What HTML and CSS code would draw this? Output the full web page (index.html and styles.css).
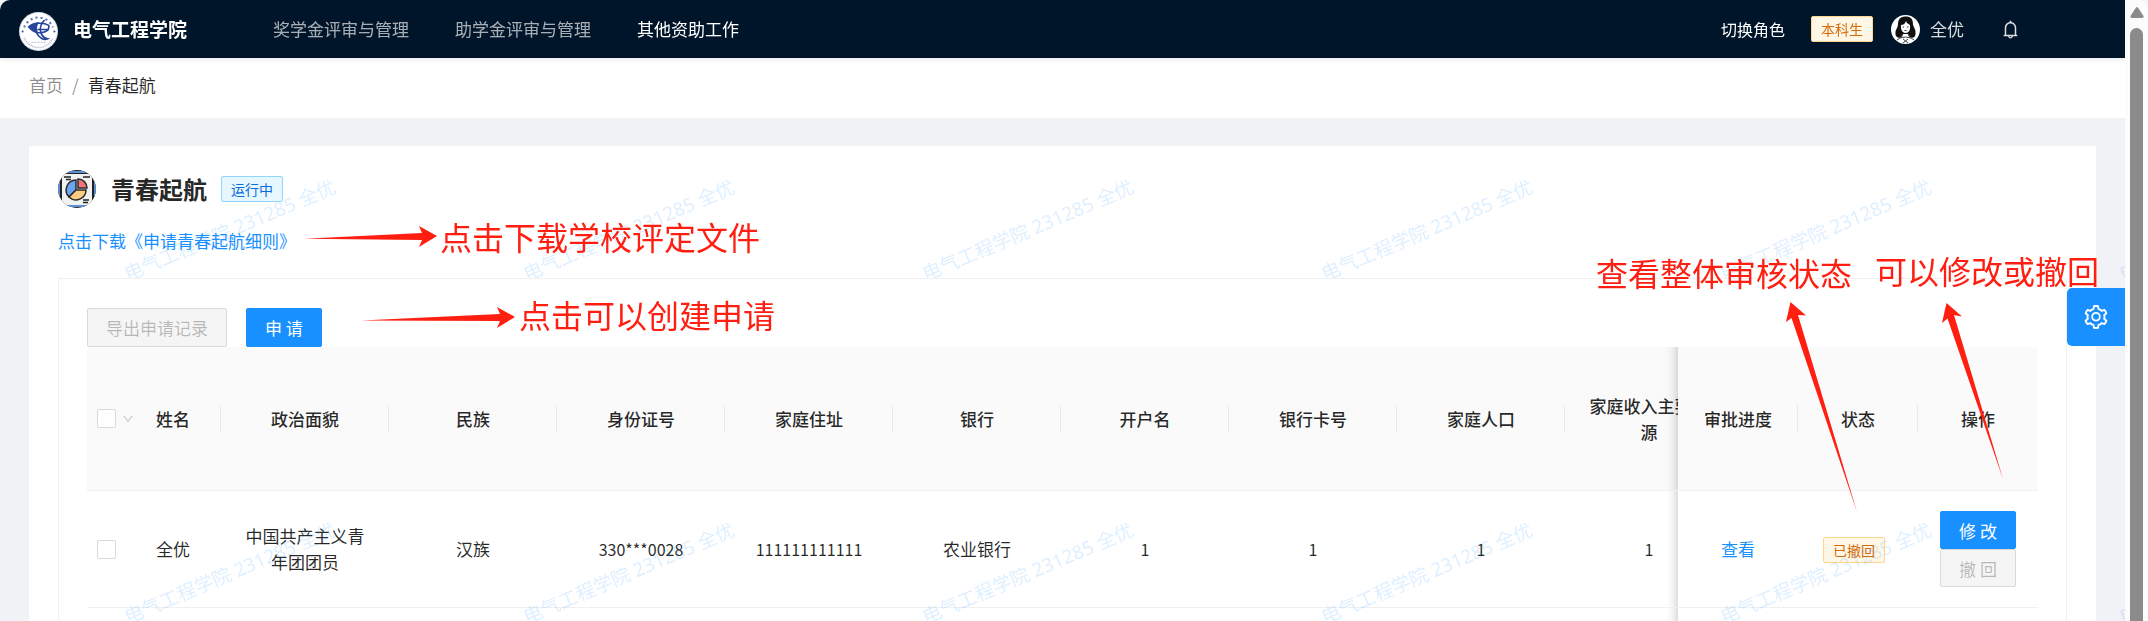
FILE: index.html
```html
<!DOCTYPE html>
<html lang="zh-CN">
<head>
<meta charset="utf-8">
<title>青春起航</title>
<link rel="stylesheet" href="styles.css">
</head>
<body>
<div class="page">
  <header class="topbar">
    <svg class="logo" viewBox="0 0 38 38" aria-hidden="true">
      <circle cx="19" cy="19" r="19" fill="#d9dde8"/>
      <circle cx="19" cy="19" r="18" fill="#fff"/>
      <g fill="none" stroke="#5b74b4" stroke-width="2" stroke-dasharray="2 3">
        <path d="M5 15A15 15 0 0 1 33 15"/>
      </g>
      <path d="M5 25A15 15 0 0 0 33 25" fill="none" stroke="#a9b3cf" stroke-width="1.5" stroke-dasharray="1 1"/>
      <path d="M12 29.500H26" stroke="#b5bdd4" stroke-dasharray="2 1"/>
      <circle cx="3.500" cy="19" r="1" fill="#31509f"/><circle cx="34.500" cy="19" r="1" fill="#31509f"/>
      <path d="M9 15C12 11 16 10 20 10C17 13 17 17 19 21C14 20 11 18 9 15Z" fill="#27459a"/>
      <g fill="none" stroke="#27459a" stroke-width="1.600">
        <path d="M9 15C14 10 24 10 29 13C30 18 25 21 17 20"/>
        <path d="M25 8C19 13 19 24 28 26C24 28 19 25 17 20"/>
        <path d="M18 17H29"/>
      </g>
    </svg>
    <span class="school">电气工程学院</span>
    <nav class="menu">
      <a href="#">奖学金评审与管理</a>
      <a href="#">助学金评审与管理</a>
      <a href="#" class="current">其他资助工作</a>
    </nav>
    <div class="account">
      <a href="#" class="switch">切换角色</a>
      <span class="tag tag-orange">本科生</span>
      <span class="user">
        <svg class="avatar" viewBox="0 0 29 29" aria-hidden="true">
          <circle cx="14.500" cy="14.500" r="14.500" fill="#fff"/>
          <path d="M7 9C7 4 10 1 15 1.500C20 1 22 5 22 9C22 12 25 14 24.500 18C25 22 22 24 18 22L17 19H12L11 22C8 24 4 22 4.500 18C4 15 7 13 7 9Z" fill="#111"/>
          <path d="M10 10C12 10 14 9 15 6C16 9 18 9 19 10C19.500 15 18 18 14.500 18C11 18 9.500 14 10 10Z" fill="#fff"/>
          <path d="M11.500 12H13M16 12H17.500M13.500 15.500H15.500M12 19L9 23L14.500 22L20 23L17 19M9 23L6 25M20 23L23 25M12 24L17 28M17 24L12 28" fill="none" stroke="#444"/>
        </svg>
        全优
      </span>
      <button class="bell" aria-label="通知">
        <svg viewBox="0 0 1024 1024"><path d="M816 768h-24V428c0-141.1-104.3-257.7-240-277.1V112c0-22.1-17.9-40-40-40s-40 17.9-40 40v38.9c-135.7 19.4-240 136-240 277.1v340h-24c-17.7 0-32 14.3-32 32v32c0 4.4 3.6 8 8 8h216c0 61.8 50.2 112 112 112s112-50.2 112-112h216c4.400 0 8-3.600 8-8v-32c0-17.700-14.300-32-32-32zM512 888c-26.500 0-48-21.500-48-48h96c0 26.500-21.500 48-48 48zM304 768V428c0-55.600 21.600-107.800 60.900-147.100S456.400 220 512 220c55.600 0 107.800 21.600 147.100 60.900S720 372.400 720 428v340H304z"/></svg>
      </button>
    </div>
  </header>

  <nav class="crumbs" aria-label="面包屑">
    <a href="#">首页</a><span class="slash">/</span><span class="here">青春起航</span>
  </nav>

  <main class="content">
    <section class="card">
      <div class="heading">
        <svg class="badge" viewBox="0 0 38 38" aria-hidden="true">
          <clipPath id="round"><circle cx="19" cy="19" r="19"/></clipPath>
          <g clip-path="url(#round)">
            <rect width="38" height="38" fill="#222"/>
            <path d="M0 2H38M0 36H38M1 0V38M37 0V38" stroke="#5f8fd6" stroke-width="2"/>
            <rect x="4" y="4" width="30" height="31" fill="#f1f1f1"/>
            <path d="M6 7H13M8 9.500H13M25 7H32M25 30H31M25 32.500H30" stroke="#222" stroke-width="1.300"/>
            <g stroke="#2b2b2b" stroke-width="1.500">
              <path d="M18 20V10A10 10 0 0 0 11 27Z" fill="#6ba5ee"/>
              <path d="M18 20L11 27A10 10 0 0 0 28 20Z" fill="#fdcb82"/>
              <path d="M20 18V9A9 9 0 0 1 29 18Z" fill="#f3747c"/>
            </g>
          </g>
        </svg>
        <h1>青春起航</h1>
        <span class="tag tag-blue">运行中</span>
      </div>
      <a href="#" class="download">点击下载《申请青春起航细则》</a>

      <div class="panel">
        <div class="actions">
          <button class="btn" disabled>导出申请记录</button>
          <button class="btn primary">申 请</button>
        </div>
        <div class="scroller">
          <table class="records">
            <colgroup>
              <col class="c-check"><col class="c-name">
              <col><col><col><col><col><col><col><col><col>
              <col class="c-fixed"><col class="c-fixed"><col class="c-fixed">
            </colgroup>
            <thead>
              <tr>
                <th class="check"><span class="pick"><input type="checkbox" aria-label="全选"><button class="more" aria-label="选择菜单"><svg viewBox="0 0 1024 1024"><path d="M884 256h-75c-5.100 0-9.900 2.500-12.900 6.600L512 654.200 227.900 262.600c-3-4.100-7.800-6.600-12.900-6.600h-75c-6.500 0-10.300 7.400-6.500 12.700l352.600 486.100c12.800 17.600 39 17.600 51.700 0l352.600-486.100c3.900-5.300.1-12.700-6.400-12.700z"/></svg></button></span></th>
                <th class="rule">姓名</th>
                <th class="rule">政治面貌</th>
                <th class="rule">民族</th>
                <th class="rule">身份证号</th>
                <th class="rule">家庭住址</th>
                <th class="rule">银行</th>
                <th class="rule">开户名</th>
                <th class="rule">银行卡号</th>
                <th class="rule">家庭人口</th>
                <th>家庭收入主要来源</th>
                <th class="rule pin pin-3">审批进度</th>
                <th class="rule pin pin-2">状态</th>
                <th class="pin pin-1">操作</th>
              </tr>
            </thead>
            <tbody>
              <tr>
                <td class="check"><span class="pick"><input type="checkbox" aria-label="选择全优"></span></td>
                <td>全优</td>
                <td>中国共产主义青年团团员</td>
                <td>汉族</td>
                <td class="num">330***0028</td>
                <td class="num">111111111111</td>
                <td>农业银行</td>
                <td class="num">1</td>
                <td class="num">1</td>
                <td class="num">1</td>
                <td class="num">1</td>
                <td class="pin pin-3"><a href="#">查看</a></td>
                <td class="pin pin-2 state"><span class="tag tag-orange">已撤回</span></td>
                <td class="pin pin-1"><span class="ops"><button class="btn primary small">修 改</button><button class="btn small" disabled>撤 回</button></span></td>
              </tr>
              <tr>
                <td colspan="11"></td>
                <td class="pin pin-3"></td>
                <td class="pin pin-2"></td>
                <td class="pin pin-1"></td>
              </tr>
            </tbody>
          </table>
        </div>
      </div>
    </section>
  </main>

  <svg class="watermark" aria-hidden="true">
    <pattern id="mark" width="399" height="343" patternUnits="userSpaceOnUse">
      <text transform="translate(128 281) rotate(-23)">电气工程学院 231285 全优</text>
    </pattern>
    <rect width="100%" height="100%" fill="url(#mark)"/>
  </svg>

  <button class="settings" aria-label="设置">
    <svg viewBox="64 64 896 896"><path d="M924.800 625.700l-65.500-56c3.100-19 4.700-38.400 4.700-57.800s-1.600-38.800-4.700-57.800l65.500-56a32.030 32.030 0 009.300-35.200l-.9-2.600a443.740 443.740 0 00-79.700-137.900l-1.800-2.100a32.120 32.120 0 00-35.100-9.500l-81.300 28.900c-30-24.600-63.500-44-99.700-57.600l-15.700-85a32.050 32.050 0 00-25.800-25.700l-2.700-.5c-52.100-9.400-106.900-9.400-159 0l-2.700.5a32.050 32.050 0 00-25.800 25.700l-15.800 85.400a351.860 351.860 0 00-99 57.400l-81.900-29.100a32 32 0 00-35.100 9.500l-1.800 2.100a446.020 446.020 0 00-79.700 137.900l-.9 2.600c-4.500 12.500-.8 26.500 9.300 35.200l66.300 56.600c-3.100 18.800-4.600 38-4.600 57.100 0 19.200 1.500 38.400 4.600 57.100L99 625.500a32.030 32.030 0 00-9.300 35.200l.9 2.600c18.100 50.400 44.900 96.900 79.700 137.900l1.800 2.100a32.120 32.120 0 0035.100 9.500l81.900-29.100c29.800 24.500 63.100 43.900 99 57.400l15.800 85.400a32.050 32.050 0 0025.800 25.700l2.700.5a449.400 449.400 0 00159 0l2.700-.5a32.050 32.050 0 0025.800-25.700l15.700-85a350 350 0 0099.700-57.600l81.300 28.900a32 32 0 0035.100-9.500l1.800-2.100c34.800-41.100 61.600-87.500 79.700-137.900l.9-2.600c4.500-12.300.8-26.300-9.300-35zM788.300 465.900c2.500 15.100 3.800 30.600 3.800 46.100s-1.300 31-3.800 46.100l-6.600 40.100 74.700 63.900a370.030 370.030 0 01-42.600 73.600L721 702.800l-31.400 25.800c-23.900 19.600-50.500 35-79.300 45.800l-38.100 14.300-17.900 97a377.500 377.500 0 01-85 0l-17.900-97.200-37.800-14.500c-28.500-10.800-55-26.200-78.700-45.700l-31.400-25.900-93.400 33.200c-17-22.900-31.200-47.600-42.600-73.600l75.500-64.500-6.500-40c-2.400-14.900-3.700-30.300-3.700-45.500 0-15.300 1.200-30.600 3.700-45.500l6.500-40-75.500-64.500c11.300-26.100 25.600-50.700 42.600-73.600l93.400 33.200 31.400-25.900c23.700-19.500 50.200-34.900 78.700-45.700l37.900-14.300 17.900-97.200c28.100-3.200 56.800-3.200 85 0l17.900 97 38.100 14.300c28.700 10.800 55.400 26.200 79.300 45.800l31.400 25.800 92.800-32.900c17 22.900 31.200 47.600 42.600 73.600L781.800 426l6.500 39.900zM512 326c-97.200 0-176 78.800-176 176s78.800 176 176 176 176-78.800 176-176-78.800-176-176-176zm79.200 255.200A111.600 111.600 0 01512 614c-29.900 0-58-11.700-79.200-32.800A111.600 111.600 0 01400 502c0-29.900 11.700-58 32.800-79.200C454 401.600 482.100 390 512 390c29.900 0 58 11.600 79.200 32.800A111.600 111.600 0 01624 502c0 29.900-11.700 58-32.800 79.200z"/></svg>
  </button>
</div>

<div class="scrollbar" aria-hidden="true">
  <svg viewBox="0 0 14 11"><path d="M7 0C8 0 8 1 9 2L13.500 9C14 10 13 11 12 11H2C1 11 0 10 .5 9L5 2C6 1 6 0 7 0Z"/></svg>
  <div class="thumb"></div>
</div>

<svg class="arrow arrow-download" viewBox="0 0 133 21" aria-hidden="true"><path d="M0 12.700L118 7L115 0L133 10L115 21L118 14Z"/></svg>
<span class="note note-download">点击下载学校评定文件</span>
<svg class="arrow arrow-apply" viewBox="0 0 154 21" aria-hidden="true"><path d="M0 13.500L139 7L136 0L154 10L136 21L139 14Z"/></svg>
<span class="note note-apply">点击可以创建申请</span>
<svg class="arrow arrow-status" viewBox="0 0 71 210" aria-hidden="true"><path d="M4.500 0L0 20L5.500 16L71 210L12 13L20 13.500Z"/></svg>
<span class="note note-status">查看整体审核状态</span>
<svg class="arrow arrow-ops" viewBox="0 0 61 176" aria-hidden="true"><path d="M4.500 0L0 20L5.500 15.500L61 176L12 12L20 13.500Z"/></svg>
<span class="note note-ops">可以修改或撤回</span>
</body>
</html>
```

FILE: styles.css
```css
* { box-sizing: border-box; }

body {
  position: relative;
  display: flex;
  height: 100vh;
  margin: 0;
  overflow: hidden;
  background: #f4f5f5;
  color: rgba(0, 0, 0, .85);
  font: 17px/26px "Noto Sans CJK SC", "Noto Sans", sans-serif;
}

a { color: #1890ff; text-decoration: none; }
button { font: inherit; }

.page {
  position: relative;
  display: flex;
  flex: 1;
  flex-direction: column;
  min-width: 0;
  overflow: hidden;
  border-top-left-radius: 10px;
  background: #f0f2f5;
}

/* Top bar */
.topbar {
  position: relative;
  z-index: 3;
  display: flex;
  flex: none;
  align-items: center;
  height: 58px;
  padding: 0 104px 0 19px;
  background: #001529;
  box-shadow: 0 1px 5px rgba(0, 21, 41, .12);
  color: #fff;
}
.logo { width: 39px; height: 39px; margin: 4px 15px 0 0; }
.school { font-size: 19px; font-weight: 600; }
.menu { display: flex; gap: 46px; margin-left: 86px; }
.menu a { color: rgba(255, 255, 255, .65); }
.menu a.current { color: #fff; }
.account { display: flex; align-items: center; margin-left: auto; }
.switch { color: #fff; font-size: 16px; }
.account .tag { margin: 0 18px 0 26px; }
.user { display: flex; align-items: center; gap: 10px; color: rgba(255, 255, 255, .85); }
.avatar { width: 29px; height: 29px; }
.bell { display: flex; margin-left: 36px; padding: 0; border: 0; background: none; }
.bell svg { width: 21px; height: 21px; fill: #dde0e3; }

.tag {
  display: inline-block;
  padding: 0 9px;
  border: 1px solid;
  border-radius: 2px;
  font-size: 14px;
  line-height: 24px;
}
.tag-orange { border-color: #ffd591; background: #fff7e6; color: #d46b08; }
.tag-blue { border-color: #91d5ff; background: #e6f7ff; color: #096dd9; }

/* Breadcrumb */
.crumbs { display: flex; flex: none; height: 60px; padding: 14px 29px; background: #fff; }
.crumbs a, .slash { color: rgba(0, 0, 0, .45); }
.slash { margin: 0 9px; }

/* Card */
.content { display: flex; flex: 1; flex-direction: column; min-height: 0; padding: 28px 29px 0; }
.card { display: flex; flex: 1; flex-direction: column; min-height: 0; padding: 24px 29px 0; background: #fff; }
.heading { display: flex; align-items: center; height: 38px; }
.badge { width: 38px; height: 38px; margin-right: 15px; }
h1 { margin: 0 14px 0 0; font-size: 24px; line-height: 38px; }
.download { align-self: flex-start; margin-top: 20px; }
.panel {
  flex: 1;
  min-height: 0;
  margin-top: 24px;
  padding: 29px 28px 0;
  border: 1px solid #f0f0f0;
  border-bottom: 0;
  border-radius: 2px;
}
.actions { display: flex; gap: 19px; }

.btn {
  height: 39px;
  padding: 0 18px;
  border: 1px solid #d9d9d9;
  border-radius: 2px;
  background: #fff;
  line-height: 1;
}
.btn:disabled { background: #f5f5f5; color: rgba(0, 0, 0, .25); }
.btn.primary { border-color: #1890ff; background: #1890ff; color: #fff; }
.btn.small { height: 38px; }

/* Table */
.scroller { overflow: hidden; }
.records { width: 2006px; border-spacing: 0; table-layout: fixed; text-align: center; }
.c-check { width: 38px; }
.c-name { width: 96px; }
.c-fixed { width: 120px; }
th, td { padding: 0 19px; border-bottom: 1px solid #f0f0f0; }
th { position: relative; height: 144px; background: #fafafa; font-weight: 500; }
td { height: 117px; background: #fff; }
.num { font-size: 16px; }
.rule { background: linear-gradient(#e8e8e8, #e8e8e8) right center / 1px 27px no-repeat #fafafa; }
.check { padding: 0 0 0 10px; }
th.check { z-index: 1; }
.pick { display: flex; align-items: center; gap: 6px; width: 38px; }
.pick input {
  flex: none;
  width: 19px;
  height: 19px;
  margin: 0;
  border: 1px solid #d9d9d9;
  border-radius: 2px;
  appearance: none;
  background: #fff;
}
.more { display: flex; padding: 0; border: 0; background: none; }
.more svg { width: 12px; height: 12px; fill: #bfbfbf; }
.pin { position: sticky; z-index: 2; padding: 0 10px; }
.pin-1 { right: 0; }
.pin-2 { right: 120px; }
.pin-3 { right: 240px; }
.pin-3::before {
  position: absolute;
  top: 0;
  right: 100%;
  bottom: 0;
  width: 12px;
  background: linear-gradient(to left, rgba(0, 0, 0, .13), rgba(0, 0, 0, .04) 50%, transparent);
  content: "";
}
.state { padding: 0 18px 0 10px; }
.ops { display: inline-flex; flex-direction: column; vertical-align: middle; }

/* Overlays */
.watermark {
  position: absolute;
  z-index: 2;
  inset: 0;
  width: 100%;
  height: 100%;
  fill: rgba(24, 144, 255, .14);
  font-family: "Noto Sans", "Noto Sans CJK SC", sans-serif;
  font-size: 19px;
  pointer-events: none;
}
.settings {
  position: absolute;
  z-index: 4;
  top: 288px;
  right: 0;
  display: flex;
  align-items: center;
  justify-content: center;
  width: 58px;
  height: 58px;
  padding: 0;
  border: 0;
  border-radius: 5px 0 0 5px;
  background: #1890ff;
}
.settings svg { width: 24px; height: 24px; fill: #fff; }

.scrollbar {
  display: flex;
  flex: none;
  flex-direction: column;
  align-items: center;
  gap: 10px;
  width: 23px;
  padding-top: 7px;
  border-top-right-radius: 10px;
  background: #fcfcfc;
}
.scrollbar svg { width: 14px; height: 11px; fill: #8b8b8b; }
.thumb { flex: 1; width: 13px; border-radius: 7px 7px 0 0; background: #8b8b8b; }

.note {
  position: absolute;
  z-index: 5;
  color: #ff1e10;
  font-size: 32px;
  line-height: 40px;
  white-space: nowrap;
}
.arrow { position: absolute; z-index: 5; fill: #ff1e10; }
.note-download { top: 216px; left: 440px; }
.note-apply { top: 294px; left: 519px; }
.note-status { top: 252px; right: 296px; }
.note-ops { top: 250px; right: 49px; }
.arrow-download { top: 226px; left: 304px; width: 133px; }
.arrow-apply { top: 307px; left: 361px; width: 154px; }
.arrow-status { top: 302px; right: 291px; width: 71px; }
.arrow-ops { top: 303px; right: 145px; width: 61px; }
```
